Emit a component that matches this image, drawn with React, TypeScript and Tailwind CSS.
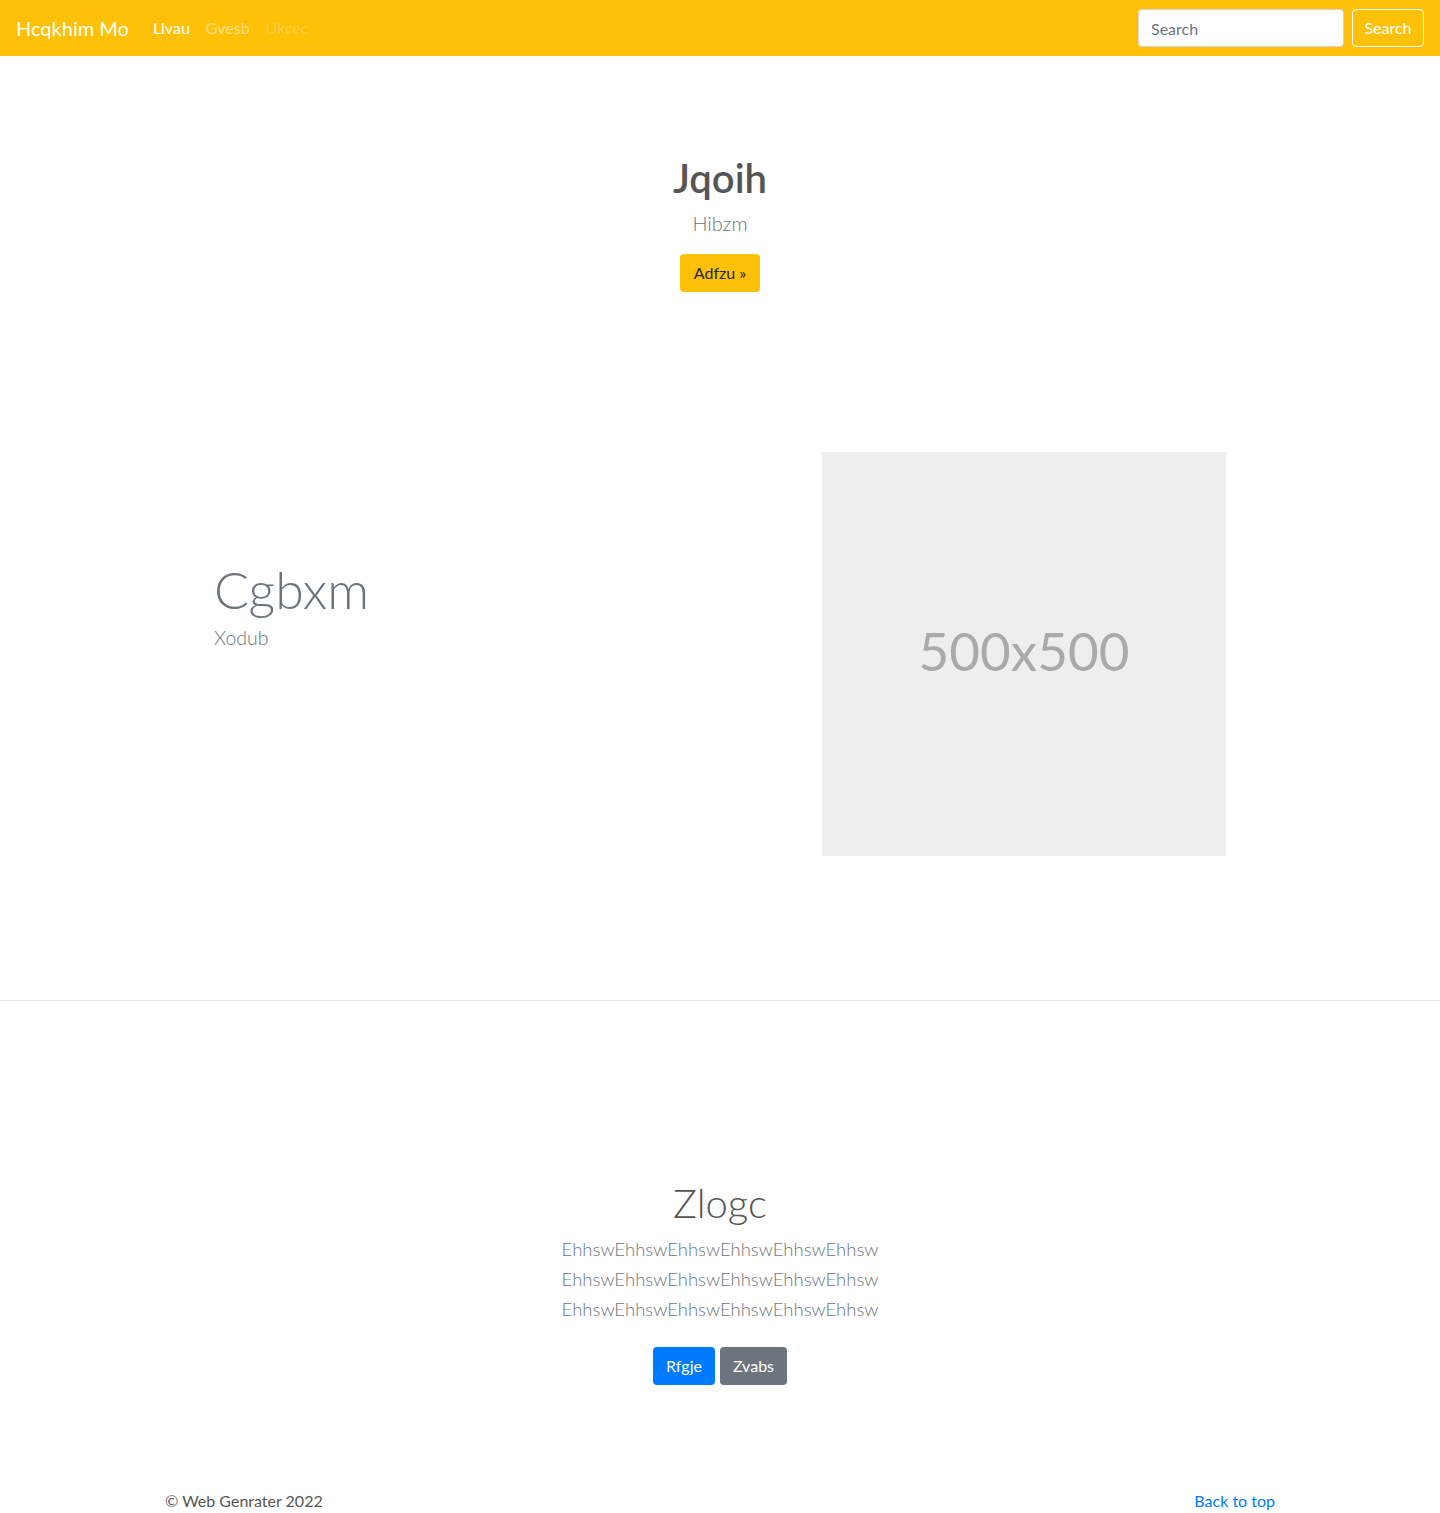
import React from "react";

export default function App() {
  const line = "EhhswEhhswEhhswEhhswEhhswEhhsw";
  return (
    <div className="min-h-[1513px] bg-white text-[#212529] font-['Lato',sans-serif]">
      <nav className="h-14 bg-[#ffc107] flex items-center px-4">
        <span className="text-[20px] text-white mr-4">Hcqkhim Mo</span>
        <div className="flex items-center text-[16px]">
          <span className="px-2 text-white">Llvau</span>
          <span className="px-2 text-white/50">Gvesb</span>
          <span className="px-2 text-white/25">Ukcec</span>
        </div>
        <div className="ml-auto flex items-center">
          <input
            className="w-[206px] h-[38px] rounded-[4px] border border-[#ced4da] bg-white px-3 text-[16px] placeholder:text-[#6c757d] mr-2 outline-none"
            placeholder="Search"
          />
          <button className="h-[38px] w-[72px] rounded-[4px] border border-white text-white text-[16px]">
            Search
          </button>
        </div>
      </nav>

      <section className="pt-[98px] text-center">
        <h1 className="text-[40px] leading-[48px] font-semibold text-[#555]">Jqoih</h1>
        <p className="mt-[6px] text-[20px] leading-[30px] font-light text-[#6c757d]">Hibzm</p>
        <button className="mt-[16px] h-[38px] w-[80px] rounded-[4px] bg-[#ffc107] text-[16px] text-[#212529]">
          Adfzu »
        </button>
      </section>

      <section className="mt-[160px] flex w-[1140px] mx-auto">
        <div className="w-[672px] pl-[64px] pt-[104px]">
          <h2 className="text-[52px] leading-[66px] font-light text-[#6c757d]">Cgbxm</h2>
          <p className="mt-[1px] text-[19.5px] leading-[30px] font-light text-[#6c757d]">Xodub</p>
        </div>
        <div className="w-[404px] h-[404px] bg-[#eeeeee] flex items-center justify-center pb-[6px]">
          <span className="text-[53px] text-[#aaaaaa]">500x500</span>
        </div>
      </section>

      <hr className="mt-[144px] border-0 border-t border-[#e5e5e5]" />

      <section className="pt-[178px] text-center">
        <h1 className="text-[40px] leading-[48px] font-light text-[#555]">Zlogc</h1>
        <p className="mt-[7px] text-[18.5px] leading-[30px] font-light text-[#6c757d]">
          {line}
          <br />
          {line}
          <br />
          {line}
        </p>
        <div className="mt-[23px] flex justify-center gap-[5px]">
          <button className="h-[38px] w-[62px] rounded-[4px] bg-[#007bff] text-white text-[16px]">Rfgje</button>
          <button className="h-[38px] w-[67px] rounded-[4px] bg-[#6c757d] text-white text-[16px]">Zvabs</button>
        </div>
      </section>

      <footer className="mt-[104px] w-[1140px] mx-auto px-[15px] flex justify-between text-[16px] leading-[24px]">
        <span className="text-[#555]">© Web Genrater 2022</span>
        <span className="text-[#007bff]">Back to top</span>
      </footer>
    </div>
  );
}
